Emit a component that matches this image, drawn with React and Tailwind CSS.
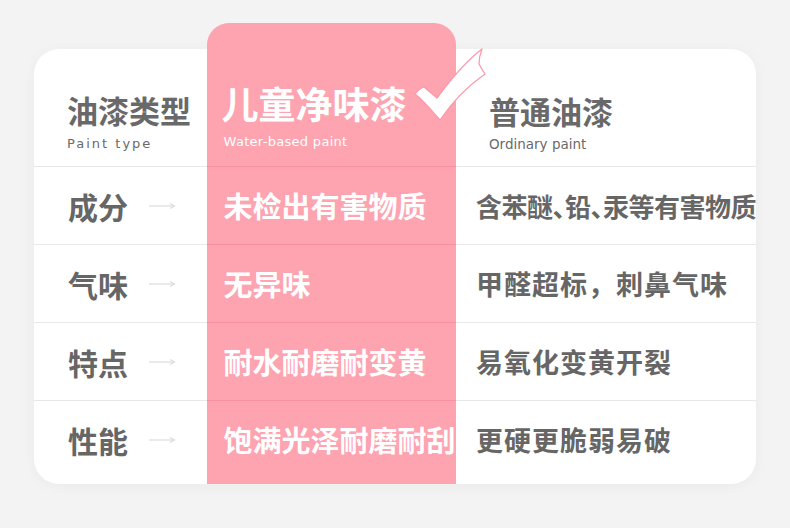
import React from "react";

const rows = [
  { label: "成分", good: "未检出有害物质", bad: "含苯醚、铅、汞等有害物质", tight: true },
  { label: "气味", good: "无异味", bad: "甲醛超标，刺鼻气味" },
  { label: "特点", good: "耐水耐磨耐变黄", bad: "易氧化变黄开裂" },
  { label: "性能", good: "饱满光泽耐磨耐刮", bad: "更硬更脆弱易破" },
];

const cjk = { fontFamily: '"Noto Sans CJK SC", "Noto Sans", sans-serif' };
const latin = { fontFamily: '"DejaVu Sans", "Liberation Sans", sans-serif' };

function Arrow() {
  return (
    <svg width="28" height="8" viewBox="0 0 28 8" className="ml-[20px]">
      <line x1="1" y1="4" x2="26" y2="4" stroke="#dcdcdc" strokeWidth="1.2" />
      <path d="M22 1.5 L26.5 4 L22 6.5" fill="none" stroke="#dcdcdc" strokeWidth="1.2" />
    </svg>
  );
}

function Check() {
  return (
    <svg
      width="86"
      height="86"
      viewBox="0 0 86 86"
      className="absolute left-[200px] top-[18px]"
    >
      <path
        d="M8 53 C11 49 14 47 17 46 L30 57 C44 38 58 21 75 8 C73 13 72 18 72 23 C74 27 76 30 78 33 C62 44 46 60 33 79 C25 70 17 60 8 53 Z"
        fill="#ffffff"
        stroke="#fb9aab"
        strokeWidth="1.3"
        strokeLinejoin="round"
      />
    </svg>
  );
}

export default function App() {
  return (
    <div className="h-[528px] w-[790px] bg-[#f3f3f3] pl-[34px] pt-[49px]" style={cjk}>
      <div className="flex h-[435px] w-[722px] rounded-[25px] bg-white shadow-[0_2px_14px_rgba(0,0,0,0.04)]">
        {/* left: row labels */}
        <div className="flex w-[173px] flex-col">
          <div className="h-[117px] pl-[33px] pt-[45px]">
            <div className="text-[31px] font-bold leading-none text-[#696969]">油漆类型</div>
            <div className="mt-[12px] text-[13px] leading-none tracking-[2px] text-[#6a6a6a]" style={latin}>
              Paint type
            </div>
          </div>
          {rows.map((r) => (
            <div key={r.label} className="flex h-[78px] items-center border-t border-[#e8e8e8] pl-[34px]">
              <span className="text-[30px] font-bold leading-none text-[#666666]">{r.label}</span>
              <Arrow />
            </div>
          ))}
        </div>

        {/* middle: water-based paint */}
        <div className="relative -mt-[26px] flex h-[461px] w-[250px] flex-col rounded-t-[22px] bg-[#fea3b0]">
          <div className="h-[143px] pl-[15px] pt-[62px]">
            <div className="text-[37px] font-bold leading-none text-white">儿童净味漆</div>
            <div className="mt-[13px] pl-[2px] text-[13px] leading-none tracking-[0.3px] text-white" style={latin}>
              Water-based paint
            </div>
          </div>
          {rows.map((r) => (
            <div key={r.label} className="flex h-[78px] items-center border-t border-[#f8909f] pl-[17px]">
              <span className="text-[29px] font-bold leading-none text-white">{r.good}</span>
            </div>
          ))}
          <Check />
        </div>

        {/* right: ordinary paint */}
        <div className="flex flex-1 flex-col">
          <div className="h-[117px] pl-[33px] pt-[46px]">
            <div className="text-[31px] font-bold leading-none text-[#696969]">普通油漆</div>
            <div className="mt-[12px] text-[13.5px] leading-none text-[#6a6a6a]" style={latin}>
              Ordinary paint
            </div>
          </div>
          {rows.map((r) => (
            <div key={r.label} className="flex h-[78px] items-center border-t border-[#e8e8e8] pl-[20px]">
              <span
                className={
                  r.tight
                    ? "whitespace-nowrap text-[26px] font-bold leading-none tracking-[-0.5px] text-[#666666] [font-feature-settings:'halt']"
                    : "whitespace-nowrap text-[27px] font-bold leading-none tracking-[1px] text-[#666666]"
                }
              >
                {r.bad}
              </span>
            </div>
          ))}
        </div>
      </div>
    </div>
  );
}
